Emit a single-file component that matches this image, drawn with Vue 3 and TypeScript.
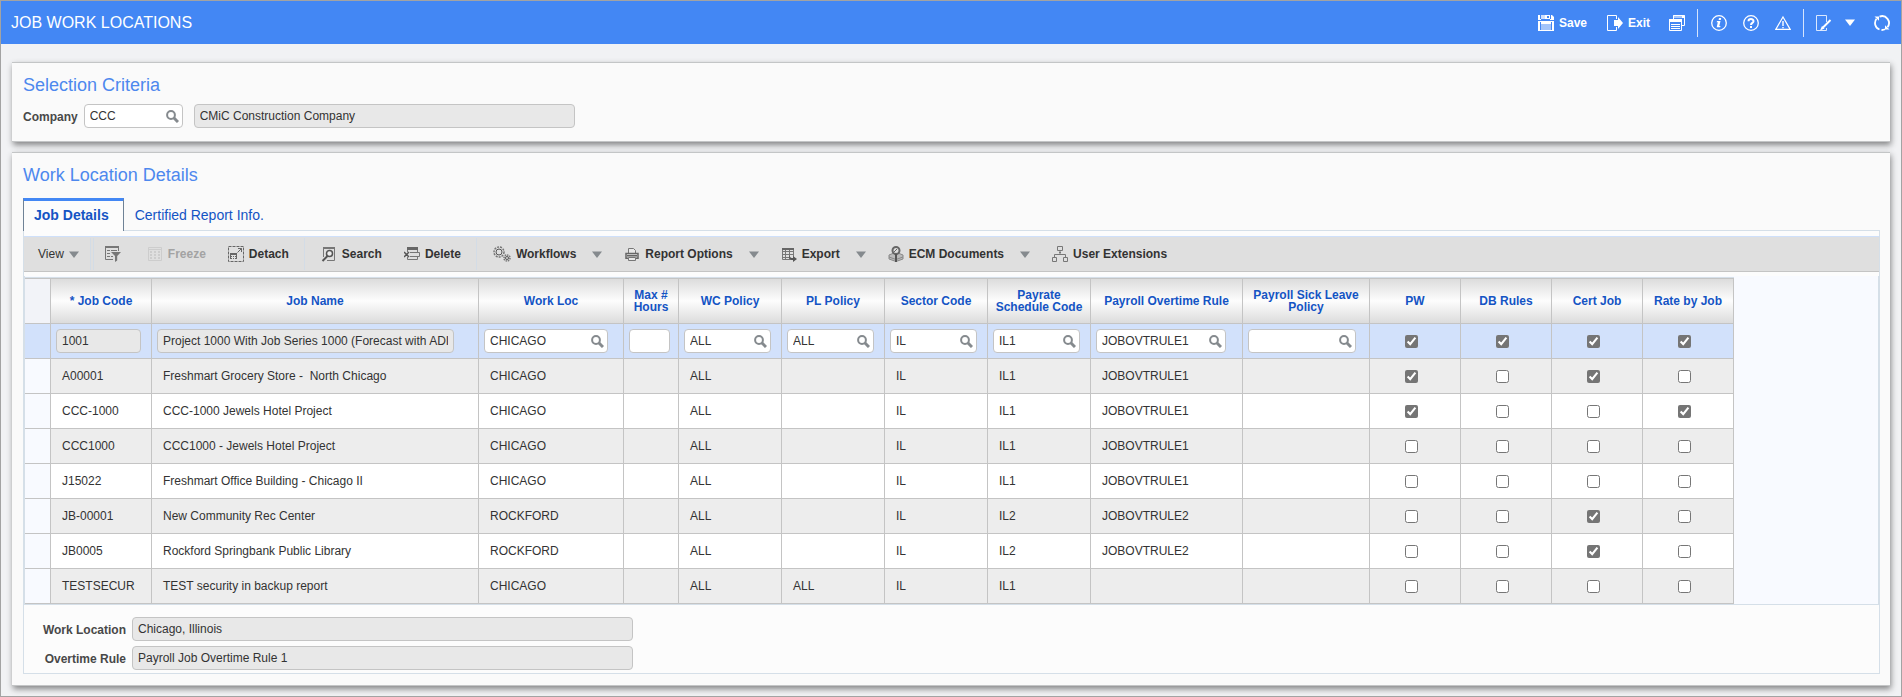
<script setup lang="ts">
import { ref } from 'vue'

type Flags = [boolean, boolean, boolean, boolean]
interface Column {
  key: string
  title: string
  width: number
  field?: number
  lookup?: boolean
  locked?: boolean
}
interface Row {
  cells: string[]
  flags: Flags
}

const textColumns: Column[] = [
  { key: 'code', title: '* Job Code', width: 101, field: 85, locked: true },
  { key: 'name', title: 'Job Name', width: 327, field: 297, locked: true },
  { key: 'loc', title: 'Work Loc', width: 145, field: 124, lookup: true },
  { key: 'max', title: 'Max #\nHours', width: 55, field: 41 },
  { key: 'wc', title: 'WC Policy', width: 103, field: 87, lookup: true },
  { key: 'pl', title: 'PL Policy', width: 103, field: 87, lookup: true },
  { key: 'sector', title: 'Sector Code', width: 103, field: 87, lookup: true },
  { key: 'payrate', title: 'Payrate\nSchedule Code', width: 103, field: 87, lookup: true },
  { key: 'overtime', title: 'Payroll Overtime Rule', width: 152, field: 130, lookup: true },
  { key: 'sick', title: 'Payroll Sick Leave\nPolicy', width: 127, field: 108, lookup: true },
]
const flagColumns: Column[] = [
  { key: 'pw', title: 'PW', width: 91 },
  { key: 'db', title: 'DB Rules', width: 91 },
  { key: 'cert', title: 'Cert Job', width: 91 },
  { key: 'rate', title: 'Rate by Job', width: 91 },
]
const columns = [...textColumns, ...flagColumns]

const rows = ref<Row[]>([
  { cells: ['1001', 'Project 1000 With Job Series 1000 (Forecast with ADI', 'CHICAGO', '', 'ALL', 'ALL', 'IL', 'IL1', 'JOBOVTRULE1', ''], flags: [true, true, true, true] },
  { cells: ['A00001', 'Freshmart Grocery Store -  North Chicago', 'CHICAGO', '', 'ALL', '', 'IL', 'IL1', 'JOBOVTRULE1', ''], flags: [true, false, true, false] },
  { cells: ['CCC-1000', 'CCC-1000 Jewels Hotel Project', 'CHICAGO', '', 'ALL', '', 'IL', 'IL1', 'JOBOVTRULE1', ''], flags: [true, false, false, true] },
  { cells: ['CCC1000', 'CCC1000 - Jewels Hotel Project', 'CHICAGO', '', 'ALL', '', 'IL', 'IL1', 'JOBOVTRULE1', ''], flags: [false, false, false, false] },
  { cells: ['J15022', 'Freshmart Office Building - Chicago II', 'CHICAGO', '', 'ALL', '', 'IL', 'IL1', 'JOBOVTRULE1', ''], flags: [false, false, false, false] },
  { cells: ['JB-00001', 'New Community Rec Center', 'ROCKFORD', '', 'ALL', '', 'IL', 'IL2', 'JOBOVTRULE2', ''], flags: [false, false, true, false] },
  { cells: ['JB0005', 'Rockford Springbank Public Library', 'ROCKFORD', '', 'ALL', '', 'IL', 'IL2', 'JOBOVTRULE2', ''], flags: [false, false, true, false] },
  { cells: ['TESTSECUR', 'TEST security in backup report', 'CHICAGO', '', 'ALL', 'ALL', 'IL', 'IL1', '', ''], flags: [false, false, false, false] },
])

const company = ref('CCC')
const companyName = 'CMiC Construction Company'
const workLocation = 'Chicago, Illinois'
const overtimeRule = 'Payroll Job Overtime Rule 1'
</script>

<template>
  <div class="window">
    <header class="titlebar">
      <h1>JOB WORK LOCATIONS</h1>
      <div class="actions">
        <button type="button" class="action">
          <svg width="16" height="16" viewBox="0 0 16 16" aria-hidden="true">
            <path fill="#fff" d="M0 0h14l2 2v3H0zM0 6h16v10H0z" />
            <path fill="#4387f4" d="M2 0h1v4H2zM12 0h1v4h-1zM3 4h9v1H3zM9 1h2v2H9z" />
            <path fill="#cfe0fd" d="M3 0h4v4H3z" />
            <path fill="#4387f4" d="M2 7h1v8H2zM13 7h1v8h-1z" />
            <path fill="#a3c4fa" d="M3 9h10v6H3z" />
          </svg>
          <span>Save</span>
        </button>
        <button type="button" class="action exit">
          <svg width="16" height="16" viewBox="0 0 16 16" aria-hidden="true">
            <path fill="none" stroke="#fff" d="M9.500 4V.5H.5v15h9V12" />
            <path fill="#fff" d="M7 5h4V2l5 6-5 6v-3H7z" />
          </svg>
          <span>Exit</span>
        </button>
        <button type="button" class="action stack" aria-label="Windows">
          <svg width="16" height="16" viewBox="0 0 16 16" aria-hidden="true">
            <path fill="#a9c8fb" d="M4 0h12v3H4z" />
            <path fill="none" stroke="#fff" d="M4.500 4V.5h11v10H13M.5 4.500h12v11H.5zM2 9.500h9M2 11.500h9M2 13.500h9" />
            <path fill="#fff" d="M0 4h13v3H0zM13 1h2v2h-2z" />
          </svg>
        </button>
        <span class="divider"></span>
        <button type="button" class="action round" aria-label="Information">
          <svg width="16" height="16" viewBox="0 0 16 16" aria-hidden="true">
            <circle cx="8" cy="8" r="7.300" fill="none" stroke="#fff" stroke-width="1.300" />
            <path fill="#fff" d="M8 3h2.200l-.4 2H7.600zM6 6h3.500l-1.200 5H9.500l-.3 1.200H5.700L6.800 7.200H5.700z" />
          </svg>
        </button>
        <button type="button" class="action round" aria-label="Help">
          <svg width="16" height="16" viewBox="0 0 16 16" aria-hidden="true">
            <circle cx="8" cy="8" r="7.300" fill="none" stroke="#fff" stroke-width="1.300" />
            <path fill="none" stroke="#fff" stroke-width="2" d="M5.500 6.300C5.500 3.400 10.500 3.400 10.500 6.200 10.500 8 8 7.800 8 10" />
            <path fill="#fff" d="M7 11h2v2H7z" />
          </svg>
        </button>
        <button type="button" class="action round" aria-label="Warnings">
          <svg width="16" height="16" viewBox="0 0 16 16" aria-hidden="true">
            <path fill="none" stroke="#fff" stroke-width="1.200" d="M8 2 15.200 14.400H.8z" />
            <path fill="#fff" d="M7.300 6h1.400v5H7.300zM7.300 12h1.400v1.300H7.300z" />
          </svg>
        </button>
        <span class="divider"></span>
        <button type="button" class="action edit" aria-label="Edit">
          <svg width="16" height="16" viewBox="0 0 16 16" aria-hidden="true">
            <path fill="none" stroke="#dbe8fe" d="M10.500 7V.5H.5v15h10V13" />
            <path fill="none" stroke="#fff" stroke-width="2" d="m14.500 5-7.500 7.500" />
            <path fill="#fff" d="m6 11 2.500 2.500L4 15.500z" />
          </svg>
        </button>
        <button type="button" class="action drop" aria-label="More">
          <svg width="10" height="7" viewBox="0 0 10 7" aria-hidden="true"><path fill="#fff" d="M0 .5h10L5 7z" /></svg>
        </button>
        <button type="button" class="action refresh" aria-label="Refresh">
          <svg width="16" height="16" viewBox="0 0 16 16" aria-hidden="true">
            <path fill="none" stroke="#fff" stroke-width="1.800" d="M5.500 14.500A6.900 6.900 0 0 1 2.500 3.800M5.500 1.600A6.900 6.900 0 0 1 13.500 12.200M11 14.300A6.900 6.900 0 0 1 7.500 15" />
            <path fill="#fff" d="M.5 1.500H5v4.300zM15.500 14.500H11v-4.300z" />
          </svg>
        </button>
      </div>
    </header>

    <main>
      <section class="panel criteria">
        <h2>Selection Criteria</h2>
        <div class="line">
          <label for="company">Company</label>
          <div class="field lookup company">
            <input id="company" v-model="company" type="text" />
            <button type="button" aria-label="Find company">
              <svg width="13" height="13" viewBox="0 0 13 13" aria-hidden="true"><circle cx="5" cy="5" r="3.900" /><path d="m8 8 4 4" /></svg>
            </button>
          </div>
          <div class="field locked company-name">
            <input type="text" :value="companyName" readonly aria-label="Company name" />
          </div>
        </div>
      </section>

      <section class="panel details">
        <h2>Work Location Details</h2>
        <div class="tabs" role="tablist">
          <button type="button" class="tab active" role="tab" aria-selected="true">Job Details</button>
          <button type="button" class="tab" role="tab" aria-selected="false">Certified Report Info.</button>
        </div>
        <div class="pane">
          <div class="toolbar">
            <button type="button" class="tool view">
              View
              <svg class="caret" width="10" height="7" viewBox="0 0 10 7" aria-hidden="true"><path d="M0 .5h10L5 7z" /></svg>
            </button>
            <span class="rule first"></span>
            <span class="rule second"></span>
            <button type="button" class="tool" aria-label="Query by example">
              <svg width="16" height="16" viewBox="0 0 16 16" aria-hidden="true">
                <path fill="#777" d="M0 0h14v2H0z" />
                <path fill="none" stroke="#777" d="M.5 1v12.500H8M13.500 1v4M2 4.500h3M6 4.500h6M2 7.500h3M2 10.500h3M6 10.500h2" />
                <path fill="#777" d="M6 6h10l-3.800 4v4.500L10 16v-6z" />
              </svg>
            </button>
            <button type="button" class="tool freeze" disabled>
              <svg width="16" height="16" viewBox="0 0 16 16" aria-hidden="true">
                <path fill="none" stroke="#cdcdcd" d="M1.500 1.500h13v13h-13zM1 3.500h14" />
                <path fill="none" stroke="#cdcdcd" stroke-width="2" stroke-dasharray="2 1" d="M4 5v9M8 5v9M12 5v9" />
              </svg>
              Freeze
            </button>
            <button type="button" class="tool">
              <svg width="16" height="16" viewBox="0 0 16 16" aria-hidden="true">
                <path fill="none" stroke="#666" stroke-dasharray="3 1" d="M.5.5h15v15H.5z" />
                <path fill="#666" d="M2 7h7v6H2z" />
                <path fill="none" stroke="#e0e0e0" d="M3 9.500h5M3 11.500h5M4.500 9v4M6.500 9v4" />
                <path fill="none" stroke="#666" d="m9.500 6.500 4-4M10 2.500h3.500V6" />
              </svg>
              Detach
            </button>
            <span class="rule"></span>
            <button type="button" class="tool">
              <svg width="16" height="16" viewBox="0 0 16 16" aria-hidden="true">
                <path fill="none" stroke="#777" d="M2.500 11V1.500h11v13H6" />
                <path fill="#777" d="M2 1h12v2H2z" />
                <circle cx="8.500" cy="7.500" r="3" fill="#eee" stroke="#555" stroke-width="1.500" />
                <path stroke="#555" stroke-width="2" d="m6.500 10-5 5" />
              </svg>
              Search
            </button>
            <button type="button" class="tool">
              <svg width="16" height="16" viewBox="0 0 16 16" aria-hidden="true">
                <path fill="#666" d="M3 1h11v3H3z" />
                <path fill="none" stroke="#777" d="M6 6.500h9.500v4H6M3.500 11v2.500h10V11M3.500 4v2M13.500 4v2" />
                <path fill="none" stroke="#555" stroke-width="1.500" d="m0 6 5 5M5 6l-5 5" />
              </svg>
              Delete
            </button>
            <span class="rule"></span>
            <button type="button" class="tool">
              <svg width="18" height="16" viewBox="0 0 18 16" aria-hidden="true" fill="none" stroke="#777">
                <circle cx="6" cy="6" r="5" stroke-width="1.500" stroke-dasharray="2 1" />
                <circle cx="6" cy="6" r="3" stroke="#555" />
                <circle cx="14" cy="12" r="3" stroke-width="1.500" stroke-dasharray="1.500 .8" />
                <circle cx="14" cy="12" r="1.500" stroke="#555" />
              </svg>
              Workflows
              <svg class="caret menu" width="10" height="7" viewBox="0 0 10 7" aria-hidden="true"><path d="M0 .5h10L5 7z" /></svg>
            </button>
            <button type="button" class="tool">
              <svg width="16" height="16" viewBox="0 0 16 16" aria-hidden="true">
                <path fill="#e8e8e8" stroke="#777" d="M4.500 7V2.500h5l2 2V7M4.500 11.500h7v3h-7z" />
                <path fill="none" stroke="#666" stroke-width="1.500" d="M4 12.300H2V7.500h12v4.800h-2M3 9.800h10" />
              </svg>
              Report Options
              <svg class="caret menu" width="10" height="7" viewBox="0 0 10 7" aria-hidden="true"><path d="M0 .5h10L5 7z" /></svg>
            </button>
            <button type="button" class="tool">
              <svg width="16" height="16" viewBox="0 0 16 16" aria-hidden="true">
                <path fill="none" stroke="#777" d="M1.500 2.500h11v11h-11zM1 5.500h12M1 8.500h12M1 11.500h8M4.500 3v11M8.500 3v11" />
                <path fill="#666" d="M1 2h12v2H1z" />
                <path fill="#555" d="M8 9c1 2.500 2 3 4 3v-2l4 3-4 3v-2c-3 0-4-1.500-4-5z" />
              </svg>
              Export
              <svg class="caret menu" width="10" height="7" viewBox="0 0 10 7" aria-hidden="true"><path d="M0 .5h10L5 7z" /></svg>
            </button>
            <button type="button" class="tool">
              <svg width="16" height="16" viewBox="0 0 16 16" aria-hidden="true">
                <path fill="#bbb" stroke="#888" d="m1 9 5-2 2 3 2-3 5 2v4l-7 2.500L1 13z" />
                <path fill="none" stroke="#888" d="m1 11 7 2.500 7-2.500" />
                <circle cx="8" cy="4.500" r="3.500" fill="#ddd" stroke="#666" stroke-width="2" />
                <path fill="#555" d="M7 8h2v8H7z" />
                <path stroke="#666" d="m6 6 3-3" />
              </svg>
              ECM Documents
              <svg class="caret menu" width="10" height="7" viewBox="0 0 10 7" aria-hidden="true"><path d="M0 .5h10L5 7z" /></svg>
            </button>
            <button type="button" class="tool">
              <svg width="16" height="16" viewBox="0 0 16 16" aria-hidden="true">
                <path fill="none" stroke="#777" d="M5.500.5h5v4h-5zM.5 11.500h4v4h-4zM11.500 11.500h4v4h-4zM8 5v3.500M2.500 11V8.500h11V11M7 6.500h2" />
              </svg>
              User Extensions
            </button>
          </div>

          <div class="grid">
            <table>
              <colgroup>
                <col class="marker-col" />
                <col v-for="c in columns" :key="c.key" :style="{ width: c.width + 'px' }" />
              </colgroup>
              <thead>
                <tr>
                  <td class="marker"></td>
                  <th v-for="c in columns" :key="c.key" scope="col">{{ c.title }}</th>
                </tr>
              </thead>
              <tbody>
                <tr v-for="(row, r) in rows" :key="r" :class="{ selected: r === 0 }">
                  <td class="marker"></td>
                  <template v-for="(c, i) in textColumns" :key="c.key">
                    <td v-if="r === 0" class="editing">
                      <div class="field" :class="{ lookup: c.lookup, locked: c.locked }" :style="{ width: c.field + 'px' }">
                        <input v-model="row.cells[i]" type="text" :readonly="c.locked" :aria-label="c.title" />
                        <button v-if="c.lookup" type="button" :aria-label="'Find ' + c.title">
                          <svg width="13" height="13" viewBox="0 0 13 13" aria-hidden="true"><circle cx="5" cy="5" r="3.900" /><path d="m8 8 4 4" /></svg>
                        </button>
                      </div>
                    </td>
                    <td v-else class="value">{{ row.cells[i] }}</td>
                  </template>
                  <td v-for="(c, i) in flagColumns" :key="c.key" class="flag">
                    <input v-model="row.flags[i]" type="checkbox" :aria-label="c.title + ' ' + row.cells[0]" />
                  </td>
                </tr>
              </tbody>
            </table>
          </div>

          <div class="footer">
            <label for="work-location">Work Location</label>
            <div class="field locked"><input id="work-location" type="text" :value="workLocation" readonly /></div>
            <label for="overtime-rule">Overtime Rule</label>
            <div class="field locked"><input id="overtime-rule" type="text" :value="overtimeRule" readonly /></div>
          </div>
        </div>
      </section>
    </main>
  </div>
</template>

<style>
body {
  margin: 0;
}
</style>

<style scoped>
.window,
.window * {
  box-sizing: border-box;
}
.window {
  min-height: 100vh;
  border: 1px solid #a3a3a3;
  background: #f1f2f4;
  color: #333;
  font-family: "Liberation Sans", Arial, sans-serif;
  font-size: 12px;
}
button,
input {
  font: inherit;
  color: inherit;
}
button {
  border: 0;
  padding: 0;
  background: none;
}
svg {
  display: block;
  flex: none;
}
.titlebar {
  display: flex;
  align-items: center;
  justify-content: space-between;
  height: 43px;
  padding: 0 11px 0 10px;
  background: #4387f4;
  color: #fff;
}
h1 {
  margin: 0;
  font-size: 16px;
  font-weight: 400;
}
.actions {
  display: flex;
  align-items: center;
}
.action {
  display: flex;
  align-items: center;
  gap: 5px;
  font-weight: 700;
}
.exit {
  margin-left: 20px;
}
.stack {
  margin: 0 12px 0 19px;
}
.divider {
  width: 1px;
  height: 28px;
  background: #d5e4fd;
}
.round {
  margin-left: 13px;
}
.round + .round {
  margin-left: 16px;
}
.round + .divider,
.edit {
  margin-left: 12px;
}
.drop {
  margin-left: 13px;
}
.refresh {
  margin-left: 19px;
}
main {
  display: flex;
  flex-direction: column;
  gap: 10px;
  padding: 18px 11px 10px;
}
.panel {
  padding: 11px 10px 13px 11px;
  border: solid #c3c5c6;
  border-width: 1px 0;
  background: #fafafa;
  box-shadow: 1px 3px 6px rgba(0, 0, 0, 0.45);
}
.details {
  padding-bottom: 11px;
}
h2 {
  margin: 0;
  color: #4d88ee;
  font-size: 18px;
  font-weight: 400;
  line-height: 22px;
}
.line {
  display: flex;
  align-items: center;
  margin-top: 8px;
}
label {
  padding-top: 2px;
  color: #484848;
  font-weight: 700;
}
.field {
  display: flex;
  align-items: center;
  height: 24px;
  border: 1px solid #c4c4c4;
  border-radius: 4px;
  background: #fff;
}
.field input {
  flex: 1;
  min-width: 0;
  height: 20px;
  margin: 0 5px;
  padding: 0;
  border: 0;
  outline: 0;
  background: transparent;
}
.field button {
  margin-right: 3px;
}
.field svg {
  fill: none;
  stroke: #858a8e;
  stroke-width: 2;
}
.field path {
  stroke-width: 3;
}
.locked {
  background: #e8e8e8;
}
.company {
  width: 99px;
  margin: 0 11px 0 6px;
}
.company-name {
  width: 381px;
}
.tabs {
  display: flex;
  height: 32px;
  margin-top: 12px;
}
.tab {
  padding: 3px 11px 2px;
  color: #1454c4;
  font-size: 14px;
}
.active {
  height: 33px;
  padding: 0 14px 3px 10px;
  border: 1px solid #6f8296;
  border-top: 3px solid #4387f4;
  border-bottom: 0;
  background: #fcfcfc;
  font-weight: 700;
  z-index: 1;
}
.pane {
  padding-top: 5px;
  border: 1px solid #d5dfe8;
  background: #fcfcfc;
}
.toolbar {
  display: flex;
  align-items: center;
  height: 36px;
  border-top: 1px solid #cfe0fa;
  border-bottom: 1px solid #c4c4c4;
  background: #dfdfdf;
}
.tool {
  display: flex;
  align-items: center;
  gap: 5px;
  height: 32px;
  padding: 0 11px;
  font-weight: 700;
  white-space: nowrap;
}
.view {
  margin-left: 3px;
  font-weight: 400;
}
.freeze {
  margin-left: 4px;
  color: #a3a3a3;
}
.caret {
  fill: #858a8e;
}
.menu {
  margin-left: 11px;
}
.rule {
  width: 1px;
  height: 32px;
  margin: 0 5px 0 4px;
  background: #d3dce6;
}
.first {
  margin: 0 2px 0 0;
}
.second {
  margin: 0;
}
.grid {
  margin-top: 4px;
  padding-top: 1px;
  overflow-x: auto;
  border: 1px solid #d5dfe8;
  border-top: 0;
  background: #f8faff;
}
table {
  width: 1709px;
  border-spacing: 0;
  border-top: 1px solid #d5dfe8;
  table-layout: fixed;
}
.marker-col {
  width: 26px;
}
td,
th {
  height: 35px;
  padding: 0;
  border-right: 1px solid #c4c4c4;
  border-bottom: 1px solid #c4c4c4;
  overflow: hidden;
  text-align: left;
  white-space: pre;
}
thead td,
th {
  height: 46px;
  border-top: 1px solid #c4c4c4;
}
th {
  background: linear-gradient(#dcdcdc, #fdfdfd 50%, #dcdcdc);
  color: #1454c4;
  line-height: 12px;
  text-align: center;
}
thead .marker {
  background: #f2f3f8;
}
tbody td {
  background: #fff;
}
tbody tr:nth-child(even) td {
  background: #ededed;
}
tbody tr.selected td {
  background: #d2e1fb;
}
tbody tr:not(.selected) td.marker {
  background: #f8faff;
}
.value {
  padding: 0 0 0 11px;
}
.editing {
  padding-left: 5px;
}
.flag {
  padding-right: 7px;
  text-align: center;
}
.flag input {
  width: 13px;
  height: 13px;
  margin: 0;
  accent-color: #757575;
  vertical-align: middle;
}
.footer {
  display: grid;
  grid-template-columns: 102px minmax(0, 501px);
  align-items: center;
  gap: 5px 6px;
  padding: 12px 0 3px;
}
.footer label {
  text-align: right;
}
</style>
